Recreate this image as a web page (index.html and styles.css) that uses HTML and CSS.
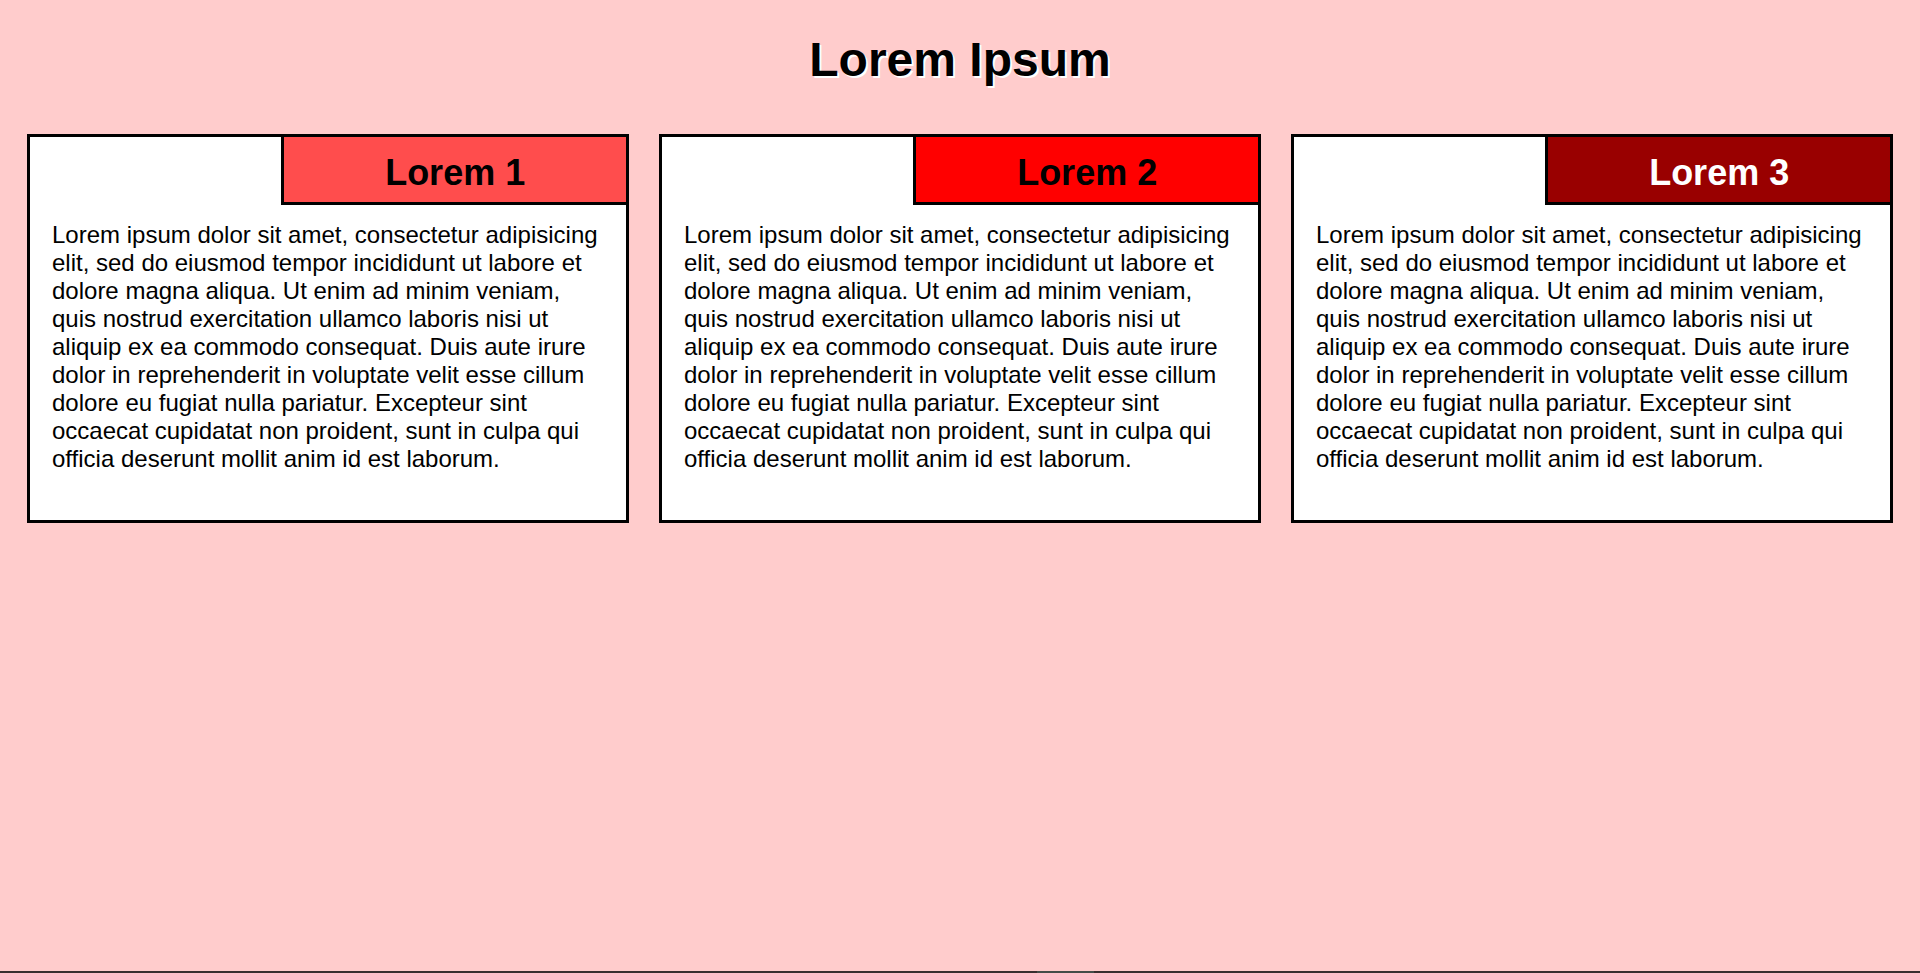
FILE: index.html
```html
<!DOCTYPE html>
<html lang="en">
<head>
  <meta charset="utf-8">
  <title>Lorem Ipsum</title>
  <link rel="stylesheet" href="styles.css">
</head>
<body>
  <h1 class="page-title">Lorem Ipsum</h1>
  <main class="cards">
    <section class="card">
      <h2 class="card-title card-title-light">Lorem 1</h2>
      <p class="card-text">Lorem ipsum dolor sit amet, consectetur adipisicing elit, sed do eiusmod tempor incididunt ut labore et dolore magna aliqua. Ut enim ad minim veniam, quis nostrud exercitation ullamco laboris nisi ut aliquip ex ea commodo consequat. Duis aute irure dolor in reprehenderit in voluptate velit esse cillum dolore eu fugiat nulla pariatur. Excepteur sint occaecat cupidatat non proident, sunt in culpa qui officia deserunt mollit anim id est laborum.</p>
    </section>
    <section class="card">
      <h2 class="card-title card-title-bright">Lorem 2</h2>
      <p class="card-text">Lorem ipsum dolor sit amet, consectetur adipisicing elit, sed do eiusmod tempor incididunt ut labore et dolore magna aliqua. Ut enim ad minim veniam, quis nostrud exercitation ullamco laboris nisi ut aliquip ex ea commodo consequat. Duis aute irure dolor in reprehenderit in voluptate velit esse cillum dolore eu fugiat nulla pariatur. Excepteur sint occaecat cupidatat non proident, sunt in culpa qui officia deserunt mollit anim id est laborum.</p>
    </section>
    <section class="card">
      <h2 class="card-title card-title-dark">Lorem 3</h2>
      <p class="card-text">Lorem ipsum dolor sit amet, consectetur adipisicing elit, sed do eiusmod tempor incididunt ut labore et dolore magna aliqua. Ut enim ad minim veniam, quis nostrud exercitation ullamco laboris nisi ut aliquip ex ea commodo consequat. Duis aute irure dolor in reprehenderit in voluptate velit esse cillum dolore eu fugiat nulla pariatur. Excepteur sint occaecat cupidatat non proident, sunt in culpa qui officia deserunt mollit anim id est laborum.</p>
    </section>
  </main>
  <div class="bottom-edge"></div>
</body>
</html>
```
FILE: styles.css
```css
* {
  box-sizing: border-box;
}

body {
  display: flex;
  flex-direction: column;
  min-height: 100vh;
  margin: 0;
  background: #ffcccc;
  color: #000;
  font-family: "Liberation Sans", Arial, Helvetica, sans-serif;
}

.page-title {
  margin: 0;
  padding: 32px 0 46px;
  font-size: 48px;
  line-height: 56px;
  text-align: center;
  text-shadow: 2px 2px #fff;
}

.cards {
  display: grid;
  grid-template-columns: repeat(3, 1fr);
  gap: 30px;
  padding: 0 27px;
}

.card {
  display: flex;
  flex-direction: column;
  border: 3px solid #000;
  background: #fff;
}

.card-title {
  align-self: flex-end;
  width: calc(58% - 1px);
  margin: 0;
  padding: 16px 0 9px;
  border: solid #000;
  border-width: 0 0 3px 3px;
  font-size: 36px;
  line-height: 40px;
  text-align: center;
}

.card-title-light {
  background: #ff4d4d;
}

.card-title-bright {
  background: #ff0000;
}

.card-title-dark {
  background: #990000;
  color: #fff;
}

.card-text {
  margin: 0;
  padding: 16px 22px 47px;
  font-size: 24px;
  line-height: 28px;
}

.bottom-edge {
  height: 2px;
  margin-top: auto;
  background: linear-gradient(to right, #3a2e30 54%, #454c49 54% 57%, #3a2e30 57%);
  border-right: 0;
}
```
